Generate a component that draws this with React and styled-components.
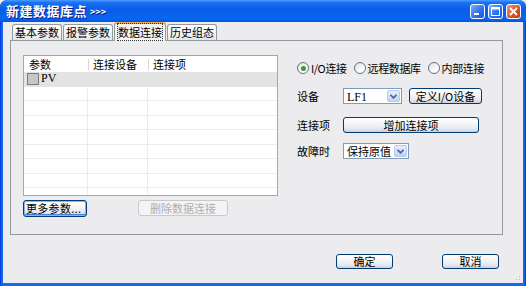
import React from "react";
import styled, { createGlobalStyle, css } from "styled-components";

const GlobalStyle = createGlobalStyle`
  html, body {
    margin: 0;
    padding: 0;
    background: #ecebee;
  }
  body {
    font-family: "Noto Sans CJK SC", "Liberation Sans", sans-serif;
    font-size: 11px;
    color: #000;
  }
`;

const Window = styled.div`
  position: relative;
  width: 526px;
  height: 286px;
  display: flex;
  flex-direction: column;
  background: linear-gradient(90deg, #0831d9 0, #166aee 2px, #166aee calc(100% - 2px), #0831d9 100%);
  border-radius: 7px 7px 0 0;
  overflow: hidden;
`;

const TitleBar = styled.div`
  height: 22px;
  flex: none;
  display: flex;
  align-items: center;
  padding: 0 5px 0 6px;
  background: linear-gradient(
    180deg,
    #4a9dff 0%,
    #1a70f2 12%,
    #0a5ce8 45%,
    #0866f0 85%,
    #0452e0 100%
  );
`;

const Title = styled.div`
  flex: 1;
  color: #fff;
  font-weight: bold;
  font-size: 13px;
  letter-spacing: 0.5px;
  text-shadow: 1px 1px 0 #0a1883;
  line-height: 20px;
`;

const Arrows = styled.span`
  font-size: 9px;
  letter-spacing: 0;
  margin-left: 3px;
  vertical-align: 1px;
`;

const Controls = styled.div`
  display: flex;
  gap: 3px;
  margin-top: 1px;
`;

const CtrlButton = styled.div`
  box-sizing: border-box;
  width: 15px;
  height: 15px;
  border: 1px solid #fff;
  border-radius: 3px;
  display: flex;
  align-items: center;
  justify-content: center;
  background: ${(p) =>
    p.$close
      ? "linear-gradient(135deg, #ec9a7c, #d8512a 60%, #c23a14)"
      : "linear-gradient(135deg, #7fb2ff, #2a6ef0 60%, #1c58dc)"};
`;

const Body = styled.div`
  position: relative;
  flex: 1;
  margin: 0 3px 3px 3px;
  background: #ecebee;
  display: flex;
  flex-direction: column;
`;

const TabStrip = styled.div`
  display: flex;
  align-items: flex-end;
  height: 18px;
  padding-left: 9px;
  gap: 1px;
`;

const Tab = styled.div`
  box-sizing: border-box;
  width: ${(p) => (p.$active ? 52 : 50)}px;
  height: 16px;
  border: 1px solid #919b9c;
  border-bottom: none;
  border-radius: 3px 3px 0 0;
  background: linear-gradient(#ffffff, #f3f3f5 60%, #e4e4ea);
  line-height: 14px;
  text-align: center;
  white-space: nowrap;
  ${(p) =>
    p.$active &&
    css`
      height: 19px;
      margin-bottom: -1px;
      border-top: 2px solid #f2a83a;
      background: #f3f3f5;
      position: relative;
      z-index: 1;
      line-height: 16px;
    `}
`;

const FocusText = styled.span`
  outline: 1px dotted #333;
  outline-offset: 0px;
`;

const Panel = styled.div`
  box-sizing: border-box;
  width: 493px;
  height: 195px;
  margin-left: 7px;
  border: 1px solid #919b9c;
  background: #ecebee;
  display: flex;
  padding: 14px 0 0 12px;
`;

const LeftColumn = styled.div`
  width: 255px;
  display: flex;
  flex-direction: column;
`;

const ListBox = styled.div`
  box-sizing: border-box;
  width: 255px;
  height: 141px;
  border: 1px solid #a7a6aa;
  background: #fff;
  overflow: hidden;
`;

const Row = styled.div`
  display: grid;
  grid-template-columns: 64px 60px 1fr;
  box-sizing: border-box;
  height: ${(p) => (p.$header ? 16 : 14.5)}px;
  border-bottom: 1px solid #ececec;
  ${(p) => p.$header && css`border-bottom: none;`}
  ${(p) => p.$selected && css`background: #e3e3e3; border-bottom-color: #e3e3e3;`}
`;

const Cell = styled.div`
  box-sizing: border-box;
  display: flex;
  align-items: center;
  padding-left: ${(p) => (p.$header ? 5 : 3)}px;
  border-right: 1px solid #ececec;
  line-height: 13px;
  overflow: hidden;
  white-space: nowrap;
  &:last-child {
    border-right: none;
  }
  ${(p) =>
    p.$header &&
    css`
      border-right: none;
      position: relative;
      &:not(:first-child)::before {
        content: "";
        position: absolute;
        left: 0;
        top: 3px;
        bottom: 2px;
        border-left: 1px solid #d6d6d6;
      }
    `}
  ${(p) => p.$plain && css`border-right: none;`}
`;

const CheckBox = styled.span`
  box-sizing: border-box;
  width: 12px;
  height: 12px;
  margin-right: 2px;
  border: 1px solid #7c7c7c;
  background: #c6c6c6;
  flex: none;
`;

const Latin = styled.span`
  font-family: "Liberation Serif", "Noto Sans CJK SC", serif;
  font-size: 12px;
`;

const ButtonRow = styled.div`
  display: flex;
  margin-top: 4px;
`;

const Button = styled.button`
  box-sizing: border-box;
  width: ${(p) => p.$w}px;
  height: ${(p) => p.$h || 16}px;
  margin-left: ${(p) => p.$ml || 0}px;
  padding: 0;
  font: inherit;
  font-size: 11px;
  line-height: 13px;
  color: #000;
  border: 1px solid #003c74;
  border-radius: 3px;
  background: linear-gradient(#ffffff, #f4f4f7 45%, #e4e6ee 80%, #c8cede);
  white-space: nowrap;
  ${(p) =>
    p.$focused &&
    css`
      box-shadow: inset 0 0 0 1px #8cb0f2, inset 0 -1px 0 1px #4f7fd8;
      text-align: left;
      padding-left: 2px;
      letter-spacing: 0.3px;
    `}
  &:disabled {
    border-color: #c9c9cc;
    color: #aeadb3;
    background: #f4f4f6;
  }
`;

const RightColumn = styled.div`
  margin-left: 19px;
  padding-top: 5px;
  display: flex;
  flex-direction: column;
  gap: 12px;
`;

const FormRow = styled.div`
  display: flex;
  align-items: center;
  height: 16px;
  margin-top: ${(p) => p.$mt || 0}px;
`;

const Label = styled.span`
  width: 46px;
  flex: none;
  line-height: 14px;
`;

const Radio = styled.label`
  display: flex;
  align-items: center;
  margin-right: 7px;
  line-height: 14px;
  letter-spacing: -0.4px;
  white-space: nowrap;
`;

const RadioCircle = styled.span`
  box-sizing: border-box;
  width: 12px;
  height: 12px;
  margin-right: 2px;
  border-radius: 50%;
  border: 1px solid #5a7390;
  background: linear-gradient(135deg, #dcdcd8, #ffffff 70%);
  display: inline-flex;
  align-items: center;
  justify-content: center;
  &::after {
    content: "";
    width: 5px;
    height: 5px;
    border-radius: 50%;
    background: ${(p) => (p.$checked ? "#3d9a2c" : "transparent")};
  }
`;

const Select = styled.div`
  box-sizing: border-box;
  width: ${(p) => p.$w}px;
  height: 16px;
  border: 1px solid #7f9db9;
  background: #fff;
  display: flex;
  align-items: center;
`;

const SelectText = styled.span`
  flex: 1;
  padding-left: 3px;
  line-height: 14px;
  white-space: nowrap;
`;

const SelectArrow = styled.div`
  box-sizing: border-box;
  width: 13px;
  height: 12px;
  margin-right: 1px;
  border: 1px solid #b8c8ee;
  border-radius: 2px;
  background: linear-gradient(#e6eefc, #bfd2f8);
  display: flex;
  align-items: center;
  justify-content: center;
`;

const Footer = styled.div`
  display: flex;
  justify-content: flex-end;
  gap: 49px;
  margin-top: 19px;
  padding-right: 24px;
`;

const Grip = styled.div`
  position: absolute;
  right: 1px;
  bottom: 1px;
  width: 10px;
  height: 10px;
  background-image: radial-gradient(circle, #b8b8bc 0.8px, transparent 1px);
  background-size: 3px 3px;
  clip-path: polygon(100% 0, 100% 100%, 0 100%);
`;

function Chevron() {
  return (
    <svg width="7" height="5" viewBox="0 0 7 5">
      <path d="M0.5 0.8 L3.5 3.8 L6.5 0.8" fill="none" stroke="#4d6185" strokeWidth="1.6" />
    </svg>
  );
}

const rows = Array.from({ length: 8 });

export default function App() {
  return (
    <>
      <GlobalStyle />
      <Window>
        <TitleBar>
          <Title>
            新建数据库点<Arrows>&gt;&gt;&gt;</Arrows>
          </Title>
          <Controls>
            <CtrlButton>
              <svg width="11" height="11" viewBox="0 0 11 11">
                <rect x="2" y="7" width="5" height="2" fill="#fff" />
              </svg>
            </CtrlButton>
            <CtrlButton>
              <svg width="11" height="11" viewBox="0 0 11 11">
                <rect x="1.5" y="1.5" width="8" height="8" fill="none" stroke="#fff" strokeWidth="1" />
                <rect x="1.5" y="1.5" width="8" height="2" fill="#fff" />
              </svg>
            </CtrlButton>
            <CtrlButton $close>
              <svg width="11" height="11" viewBox="0 0 11 11">
                <path d="M2 2 L9 9 M9 2 L2 9" stroke="#fff" strokeWidth="1.8" />
              </svg>
            </CtrlButton>
          </Controls>
        </TitleBar>

        <Body>
          <TabStrip>
            <Tab>基本参数</Tab>
            <Tab>报警参数</Tab>
            <Tab $active>
              <FocusText>数据连接</FocusText>
            </Tab>
            <Tab>历史组态</Tab>
          </TabStrip>

          <Panel>
            <LeftColumn>
              <ListBox>
                <Row $header>
                  <Cell $header>参数</Cell>
                  <Cell $header>连接设备</Cell>
                  <Cell $header>连接项</Cell>
                </Row>
                <Row $selected>
                  <Cell $plain>
                    <CheckBox />
                    <Latin>PV</Latin>
                  </Cell>
                  <Cell $plain />
                  <Cell $plain />
                </Row>
                {rows.map((_, i) => (
                  <Row key={i}>
                    <Cell />
                    <Cell />
                    <Cell />
                  </Row>
                ))}
              </ListBox>
              <ButtonRow>
                <Button $w={64} $h={17} $focused>
                  更多参数...
                </Button>
                <Button $w={90} $ml={51} disabled>
                  删除数据连接
                </Button>
              </ButtonRow>
            </LeftColumn>

            <RightColumn>
              <FormRow>
                <Radio>
                  <RadioCircle $checked />
                  I/O连接
                </Radio>
                <Radio>
                  <RadioCircle />
                  远程数据库
                </Radio>
                <Radio>
                  <RadioCircle />
                  内部连接
                </Radio>
              </FormRow>
              <FormRow>
                <Label>设备</Label>
                <Select $w={59}>
                  <SelectText>
                    <Latin>LF1</Latin>
                  </SelectText>
                  <SelectArrow>
                    <Chevron />
                  </SelectArrow>
                </Select>
                <Button $w={73} $ml={7}>
                  定义I/O设备
                </Button>
              </FormRow>
              <FormRow $mt={1}>
                <Label>连接项</Label>
                <Button $w={136}>增加连接项</Button>
              </FormRow>
              <FormRow $mt={-2}>
                <Label>故障时</Label>
                <Select $w={66}>
                  <SelectText>保持原值</SelectText>
                  <SelectArrow>
                    <Chevron />
                  </SelectArrow>
                </Select>
              </FormRow>
            </RightColumn>
          </Panel>

          <Footer>
            <Button $w={57} $h={15}>
              确定
            </Button>
            <Button $w={57} $h={15}>
              取消
            </Button>
          </Footer>
          <Grip />
        </Body>
      </Window>
    </>
  );
}
